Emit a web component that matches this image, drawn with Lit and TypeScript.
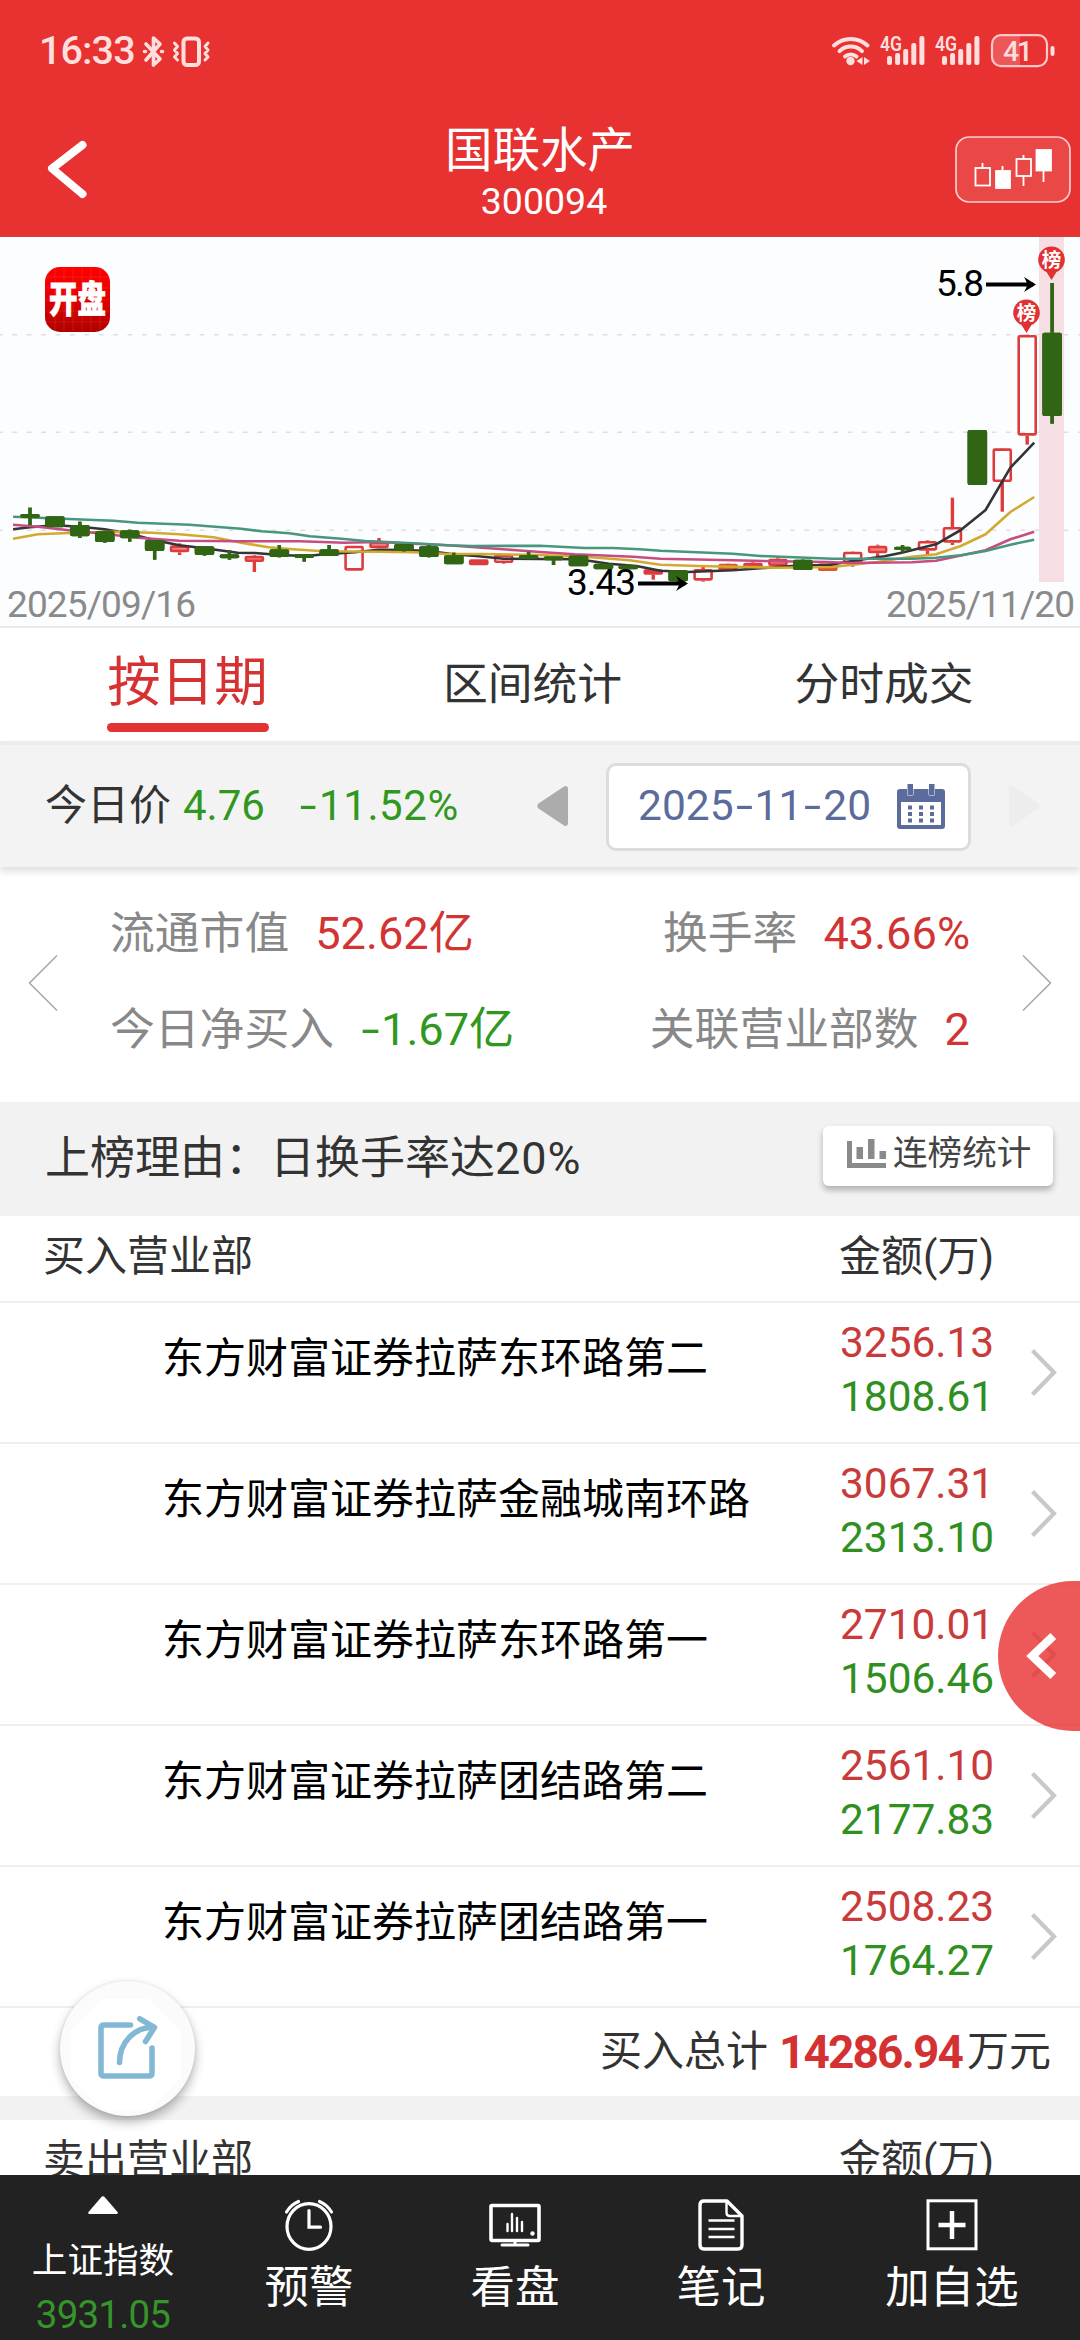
import { LitElement, html, svg, css } from "lit";
import { customElement } from "lit/decorators.js";

type Kind = "down" | "up" | "flat";
/* kind, high, low, body top, body bottom: vertical values in thirds of a pixel */
type Candle = [Kind, number, number, number, number];

const UX = 2.9037;
const px = (v: number) => v / UX;
const py = (v: number) => v / 3 - 1;

const candles: Candle[] = [
  ["down", 815, 868, 834, 846],
  ["down", 840, 874, 841, 874],
  ["down", 857, 906, 867, 901],
  ["down", 884, 920, 885, 918],
  ["down", 881, 917, 883, 907],
  ["down", 912, 971, 912, 945],
  ["up", 922, 957, 928, 949],
  ["down", 930, 959, 931, 957],
  ["down", 942, 971, 955, 967],
  ["up", 957, 1008, 959, 978],
  ["down", 927, 964, 940, 963],
  ["down", 954, 977, 954, 966],
  ["down", 927, 960, 940, 960],
  ["up", 929, 1003, 929, 1004],
  ["up", 906, 937, 916, 937],
  ["down", 924, 947, 924, 944],
  ["down", 927, 964, 931, 963],
  ["down", 950, 985, 958, 985],
  ["flat", 970, 988, 970, 988],
  ["up", 955, 983, 956, 981],
  ["down", 947, 970, 957, 969],
  ["down", 961, 987, 961, 973],
  ["down", 957, 991, 958, 991],
  ["down", 982, 1000, 983, 1000],
  ["down", 984, 1001, 988, 1000],
  ["flat", 1000, 1031, 1000, 1016],
  ["down", 1003, 1038, 1003, 1036],
  ["up", 993, 1037, 999, 1034],
  ["flat", 982, 1004, 983, 1003],
  ["flat", 977, 998, 980, 998],
  ["up", 963, 992, 968, 990],
  ["down", 970, 1002, 971, 1002],
  ["flat", 980, 1005, 982, 1005],
  ["up", 946, 992, 947, 982],
  ["up", 926, 963, 929, 952],
  ["down", 927, 949, 932, 941],
  ["up", 913, 957, 915, 944],
  ["up", 785, 927, 873, 920],
  ["down", 582, 747, 582, 747],
  ["up", 636, 827, 637, 738],
  ["up", 296, 626, 297, 599],
  ["down", 141, 563, 290, 540],
];

const averages: { color: string; points: [number, number][] }[] = [
  {
    color: "#333338",
    points: [[38,880],[87,874],[160,868],[233,872],[304,880],[377,893],[450,913],[521,928],[594,937],[690,950],[740,951],[813,957],[885,960],[955,954],[1030,949],[1100,941],[1171,942],[1245,945],[1316,955],[1390,961],[1462,968],[1568,969],[1680,970],[1768,983],[1848,990],[1918,1004],[1998,1008],[2128,1003],[2258,993],[2330,988],[2403,988],[2475,975],[2518,968],[2568,961],[2618,950],[2718,925],[2790,882],[2862,822],[2934,695],[3003,620]],
  },
  {
    color: "#d2aa30",
    points: [[38,908],[110,895],[200,891],[330,887],[440,890],[520,895],[620,904],[700,920],[780,934],[850,940],[940,946],[1100,947],[1200,949],[1300,954],[1400,954],[1568,957],[1708,963],[1828,973],[1918,986],[2028,990],[2128,992],[2258,995],[2418,993],[2475,986],[2548,978],[2598,970],[2648,962],[2718,955],[2790,930],[2862,895],[2934,828],[3003,783]],
  },
  {
    color: "#c64c82",
    points: [[38,866],[110,872],[200,883],[300,893],[400,905],[520,914],[700,916],[870,916],[1000,920],[1100,918],[1200,923],[1300,928],[1400,935],[1500,943],[1568,948],[1668,955],[1838,962],[1918,968],[2128,973],[2258,976],[2403,978],[2468,981],[2648,979],[2718,974],[2862,943],[2934,910],[3003,887]],
  },
  {
    color: "#48967e",
    points: [[38,842],[200,849],[330,854],[400,860],[550,866],[700,878],[760,886],[840,892],[900,901],[1000,909],[1060,915],[1200,922],[1300,928],[1370,930],[1568,929],[1698,936],[1778,936],[1858,940],[1918,944],[2128,953],[2208,960],[2418,968],[2648,968],[2718,965],[2790,958],[2862,945],[2934,926],[3003,911]],
  },
];

const base = css`
  :host {
    display: block;
    box-sizing: border-box;
    font-family: Roboto, "Noto Sans CJK SC", sans-serif;
    line-height: 1;
    white-space: nowrap;
    color: #333;
  }
  * {
    box-sizing: border-box;
  }
  svg {
    display: block;
    flex: none;
  }
`;

@customElement("top-bar")
class TopBar extends LitElement {
  static styles = [
    base,
    css`
      :host {
        height: 237px;
        background: #e83131;
        border-bottom: 1px solid #c4444a;
        color: #fff;
      }
      .status {
        display: flex;
        justify-content: space-between;
        height: 102px;
        padding: 0 25px 0 39px;
        align-items: center;
      }
      .left {
        display: flex;
        align-items: center;
        gap: 5px;
      }
      .clock {
        font-size: 39.5px;
        font-weight: 500;
        letter-spacing: -0.9px;
        color: #ffdede;
      }
      .nav {
        display: grid;
        grid-template-columns: 200px 1fr 200px;
        height: 134px;
      }
      .back {
        padding: 36px 0 0 44px;
      }
      .title {
        display: flex;
        flex-direction: column;
        align-items: center;
        padding-top: 24px;
      }
      .name {
        font-size: 47.5px;
        line-height: 50px;
      }
      .code {
        font-size: 37.5px;
        line-height: 50px;
        padding-left: 8px;
      }
      .tool {
        display: flex;
        justify-content: flex-end;
        padding: 34px 9px 0 0;
      }
    `,
  ];

  bars(x: number) {
    return svg`
      <text x=${x - 1} y="51" font-size="21" font-weight="600" textLength="22" lengthAdjust="spacingAndGlyphs">4G</text>
      ${[56, 53, 49, 43, 36].map(
        (y, i) => svg`<rect x=${x + 6 + i * 8.1} y=${y} width="5" height=${65 - y} rx="2"/>`,
      )}`;
  }

  render() {
    return html`
      <div class="status">
        <div class="left">
          <div class="clock">16:33</div>
          <svg width="72" height="34" viewBox="140 34 72 34" fill="none" stroke="#ffdede" stroke-width="3.6" stroke-linecap="round" stroke-linejoin="round">
            <path d="M146 44L160 59L153.500 65V38L160 44L146 60" />
            <path d="M144.500 51.500h1M161.500 51.500h1" />
            <rect x="183.500" y="38.500" width="15.500" height="26.500" rx="3.500" stroke-width="4" />
            <path d="M174.500 43l3 3.500-3 3.500 3 3.500-3 3.500 3 3M208 43l-3 3.500 3 3.500-3 3.500 3 3.500-3 3" stroke-width="3" />
          </svg>
        </div>
        <svg width="225" height="36" viewBox="830 33 225 36" fill="#ffdede">
          <g fill="none" stroke="#ffdede" stroke-width="4" stroke-linecap="round">
            <path d="M834 45.500a24.500 24.500 0 0 1 33.500 0" />
            <path d="M839.500 51.200a16 16 0 0 1 22.500 0" />
            <path d="M845 56.500a9 9 0 0 1 11.500 0" />
          </g>
          <circle cx="850.500" cy="61" r="4.200" />
          <path d="M862.500 57v8l-6-4zM864 57v8l6-4z" />
          ${this.bars(881)} ${this.bars(936)}
          <path d="M1020 36h-18q-10 0-10 10v10q0 10 10 10h18z" fill-opacity=".22" />
          <rect x="992" y="35.200" width="55" height="31" rx="9" fill="none" stroke="#ffc8c8" stroke-width="2.200" />
          <rect x="1050.500" y="46" width="4" height="10" rx="2" />
          <text x="1003" y="61" font-size="28.500" font-weight="500" textLength="30">41</text>
        </svg>
      </div>
      <div class="nav">
        <div class="back">
          <svg width="46" height="64" viewBox="44 138 46 64" fill="none" stroke="#fff" stroke-width="8" stroke-linecap="round" stroke-linejoin="round">
            <path d="M82.500 145L52 168.500L82.500 194" />
          </svg>
        </div>
        <div class="title">
          <div class="name">国联水产</div>
          <div class="code">300094</div>
        </div>
        <div class="tool">
          <svg width="116" height="67" viewBox="954.500 136 116 67" stroke="#fff" stroke-width="1.800">
            <rect x="955.500" y="137" width="114" height="65" rx="13" fill="#ffffff" fill-opacity=".11" stroke-opacity=".75" stroke-width="1.700" />
            <path d="M982 163v5M1002 166v5M1023 155v4M1023 176v10M1043 170v12" fill="none" />
            <rect x="975" y="168" width="14.500" height="17.500" fill="none" />
            <rect x="995.500" y="171" width="14" height="17" fill="#fff" />
            <rect x="1016" y="159" width="14.500" height="17" fill="none" />
            <rect x="1036" y="150" width="14.500" height="20.500" fill="#fff" />
          </svg>
        </div>
      </div>
    `;
  }
}

@customElement("kline-chart")
class KlineChart extends LitElement {
  static styles = [
    base,
    css`
      :host {
        height: 391px;
        background: #fcfdff;
        border-bottom: 2px solid #e9e9eb;
      }
      text {
        font-family: Roboto, "Noto Sans CJK SC", sans-serif;
      }
    `,
  ];

  candle([kind, high, low, top, bottom]: Candle, i: number) {
    const x = 30 + i * 24.93;
    const color = kind === "down" ? "#306613" : "#dd3c3c";
    const w = i === 35 ? 17 : 19.6;
    const edge = 2.6;
    const t = py(top);
    const h = (bottom - top) / 3;
    return svg`
      ${high < top ? svg`<rect x=${x - 1.7} y=${py(high)} width="3.4" height=${(top - high) / 3} fill=${color}/>` : null}
      ${low > bottom ? svg`<rect x=${x - 1.7} y=${py(bottom)} width="3.4" height=${(low - bottom) / 3} fill=${color}/>` : null}
      ${
        kind === "up"
          ? svg`<rect x=${x - w / 2 + edge / 2} y=${t + edge / 2} width=${w - edge} height=${Math.max(h - edge, 1)}
              fill=${h < 8 ? "#f5807c" : "none"} stroke=${color} stroke-width=${edge} rx="1"/>`
          : svg`<rect x=${x - w / 2} y=${t} width=${w} height=${h} fill=${i === 28 || i === 32 ? "#e0542c" : color} rx="2"/>`
      }`;
  }

  badge(x: number, y: number) {
    return svg`
      <path d="M${x} ${y + 20}L${x - 5} ${y + 12}A13.300 13.300 0 1 1 ${x + 5} ${y + 12}Z" fill="#e03232"/>
      <text x=${x} y=${y + 7} font-size="19.500" font-weight="600" fill="#fff" text-anchor="middle">榜</text>`;
  }

  arrow(x: number, y: number) {
    return svg`
      <path d="M${x} ${y}h47" stroke="#000" stroke-width="3.800" fill="none"/>
      <path d="M${x + 50} ${y}l-12 -7.500q3 5 3 7.500t-3 7.500z" fill="#000"/>`;
  }

  render() {
    return html`
      <svg width="1080" height="389" viewBox="0 0 1080 389">
        <g stroke="#dedee6" stroke-width="1.500" stroke-dasharray="4.800 9.600" stroke-dashoffset="2">
          <path d="M0 97.700H1080M0 195.300H1080M0 293.300H1080" />
        </g>
        <rect x="1039" y="0" width="25" height="345" fill="#f6dfe4" />
        <g>${candles.map((c, i) => this.candle(c, i))}</g>
        <g fill="none" stroke-width="2.600" stroke-linejoin="round">
          ${averages.map(
            (a) =>
              svg`<polyline stroke=${a.color} points=${a.points.map(([x, y]) => `${px(x).toFixed(1)},${py(y).toFixed(1)}`).join(" ")}/>`,
          )}
        </g>
        <g>${candles.map((c, i) => (c[0] === "down" ? this.candle(c, i) : null))}</g>
        ${this.badge(1051.5, 23)} ${this.badge(1026.5, 76)}
        <text x="936" y="59" font-size="37" textLength="48">5.8</text>
        ${this.arrow(986, 47.5)}
        <text x="567" y="357.500" font-size="37" textLength="69">3.43</text>
        ${this.arrow(638, 346.5)}
        <g fill="#8a8a8a" font-size="37">
          <text x="7" y="380" textLength="189">2025/09/16</text>
          <text x="886" y="380" textLength="189">2025/11/20</text>
        </g>
        <defs>
          <linearGradient id="logo" x2="0" y2="1">
            <stop offset="0" stop-color="#ff0000" />
            <stop offset=".35" stop-color="#f00000" />
            <stop offset="1" stop-color="#b00000" />
          </linearGradient>
        </defs>
        <rect x="45" y="30" width="65" height="65" rx="15" fill="url(#logo)" />
        <path d="M55 31v63M64 31v63M73 31v63M82 31v63M91 31v63M100 31v63M46 40h63M46 51h63M46 63h63M46 74h63M46 85h63" stroke="#fff" stroke-opacity=".09" />
        <text transform="translate(77.500 76) scale(1 1.300)" font-size="28.500" font-weight="900" fill="#fff" stroke="#fff" stroke-width=".6" text-anchor="middle">开盘</text>
      </svg>
    `;
  }
}

@customElement("day-panel")
class DayPanel extends LitElement {
  static styles = [
    base,
    css`
      .tabs {
        display: grid;
        grid-template-columns: 375px 315px 1fr;
        height: 113px;
        background: #fff;
      }
      .tab {
        display: flex;
        flex-direction: column;
        align-items: center;
        font-size: 44.8px;
        line-height: 114px;
      }
      .tab.last {
        padding-right: 2px;
      }
      .tab.active {
        color: #d63232;
        font-size: 53.5px;
        line-height: 110px;
      }
      .tab.active::after {
        content: "";
        width: 162px;
        height: 9px;
        margin-top: -15px;
        border-radius: 5px;
        background: #e43131;
      }
      .price {
        display: flex;
        align-items: center;
        height: 126px;
        padding: 0 40px 0 45px;
        background: #f3f3f3;
        border-top: 4px solid #ececec;
        box-shadow: 0 5px 7px rgba(0, 0, 0, 0.12);
        position: relative;
        font-size: 42px;
      }
      .green {
        color: #30981f;
      }
      .red {
        color: #d23434;
      }
      .today {
        width: 492px;
        display: flex;
      }
      .val {
        margin-left: 12px;
        width: 115px;
      }
      .pct {
        display: flex;
        letter-spacing: 0.6px;
      }
      .date {
        display: flex;
        align-items: center;
        width: 365px;
        height: 88px;
        margin: 1px 38px 0;
        padding: 0 23px 0 29px;
        justify-content: space-between;
        border: 3px solid #dcdcdc;
        border-radius: 10px;
        background: #fff;
        color: #5b6b9b;
        font-size: 42.5px;
      }
      .date span {
        display: flex;
      }
      .hy {
        width: 21px;
        font-style: normal;
        text-align: center;
        transform: scaleX(1.45);
      }
      .stats {
        display: flex;
        height: 235px;
        padding: 0 28px 4px;
        align-items: center;
        justify-content: space-between;
        background: #fff;
        font-size: 44.8px;
      }
      .grid {
        display: grid;
        grid-template-columns: auto auto;
        justify-content: space-between;
        width: 860px;
        row-gap: 46px;
        line-height: 50px;
        padding-bottom: 1px;
      }
      .cell {
        display: flex;
        gap: 26px;
        color: #888;
      }
      .cell.right {
        justify-content: flex-end;
      }
      .cell b {
        display: flex;
        font-weight: 400;
        font-size: 45.2px;
      }
      .reason {
        display: flex;
        align-items: center;
        justify-content: space-between;
        height: 114px;
        background: #f2f2f2;
        padding: 0 27px 0 45px;
        font-size: 45px;
      }
      .why {
        margin-top: -2px;
      }
      .why span {
        letter-spacing: 1px;
      }
      .streak {
        display: flex;
        align-items: center;
        gap: 7px;
        width: 230px;
        height: 60px;
        margin-bottom: 7px;
        padding: 0 0 4px 24px;
        background: #fff;
        border-radius: 6px;
        box-shadow: 0 4px 6px rgba(0, 0, 0, 0.28);
        font-size: 34.6px;
        color: #444;
      }
    `,
  ];

  render() {
    return html`
      <div class="tabs">
        <div class="tab active">按日期</div>
        <div class="tab">区间统计</div>
        <div class="tab last">分时成交</div>
      </div>
      <div class="price">
        <div class="today">
          <span>今日价</span><span class="val green">4.76</span><span class="pct green"><i class="hy">-</i>11.52%</span>
        </div>
        <svg width="31" height="40" viewBox="0 0 31 40" fill="#acacac">
          <path d="M31 2v36q-1 3-4 1.500L1.500 22.500q-2.500-2.500 0-5L27 .5q3-1.500 4 1.500z" />
        </svg>
        <div class="date">
          <span>2025<i class="hy">-</i>11<i class="hy">-</i>20</span>
          <svg width="48" height="45" viewBox="0 0 48 45" fill="#5b6b9b">
            <path fill-rule="evenodd" d="M3 5H45q3 0 3 3V42q0 3-3 3H3q-3 0-3-3V8q0-3 3-3zM4 18V41H44V18z" />
            <path d="M10.500 0h5.500v11h-5.500zM32 0h5.500v11h-5.500z" stroke="#fff" stroke-width="1" paint-order="stroke" />
            <path d="M11 21.500h4v4h-4zM22 21.500h4v4h-4zM33 21.500h4v4h-4zM11 28h4v4h-4zM22 28h4v4h-4zM33 28h4v4h-4zM11 34.500h4v4h-4zM22 34.500h4v4h-4zM33 34.500h4v4h-4z" />
          </svg>
        </div>
        <svg width="31" height="40" viewBox="0 0 31 40" fill="#ededed">
          <path d="M0 2v36q1 3 4 1.500L29.500 22.500q2.500-2.500 0-5L4 .5Q1-1 0 2z" />
        </svg>
      </div>
      <div class="stats">
        <svg width="30" height="60" viewBox="0 0 30 60" fill="none" stroke="#aaa" stroke-width="1.600">
          <path d="M29 2.500L1.500 30L29 57.500" />
        </svg>
        <div class="grid">
          <div class="cell">流通市值<b class="red">52.62亿</b></div>
          <div class="cell right">换手率<b class="red">43.66%</b></div>
          <div class="cell">今日净买入<b class="green"><i class="hy">-</i>1.67亿</b></div>
          <div class="cell right">关联营业部数<b class="red">2</b></div>
        </div>
        <svg width="30" height="60" viewBox="0 0 30 60" fill="none" stroke="#aaa" stroke-width="1.600">
          <path d="M1 2.500L28.500 30L1 57.500" />
        </svg>
      </div>
      <div class="reason">
        <div class="why">上榜理由：日换手率达<span>20%</span></div>
        <div class="streak">
          <svg width="39" height="29" viewBox="0 0 39 29" fill="#8a8a8a">
            <path d="M0 2h5v22h34v5H0zM9.500 8h6.500v12H9.500zM21 0h6.500v20H21zM32.500 12H39v8h-6.500z" />
          </svg>
          <span>连榜统计</span>
        </div>
      </div>
    `;
  }
}

@customElement("seat-list")
class SeatList extends LitElement {
  static styles = [
    base,
    css`
      :host {
        height: 959px;
        overflow: hidden;
        background: #fff;
        font-size: 42px;
      }
      .head {
        display: grid;
        grid-template-columns: 796px 1fr;
        height: 87px;
        padding-left: 43px;
        line-height: 81px;
        border-bottom: 2px solid #efefef;
      }
      .row {
        display: grid;
        grid-template-columns: 678px 191px auto;
        align-items: start;
        height: 141px;
        padding: 13px 0 0 162px;
        border-bottom: 2px solid #efefef;
      }
      .seat {
        color: #000;
        line-height: 86px;
      }
      .nums {
        font-size: 42.4px;
        line-height: 54px;
      }
      .buy {
        color: #c93a3a;
      }
      .sell {
        color: #30901f;
      }
      .row svg {
        margin-top: 32px;
      }
      .total {
        display: flex;
        justify-content: flex-end;
        height: 88px;
        padding-right: 29px;
        line-height: 88px;
      }
      .total b {
        margin: 0 5px 0 11px;
        font-size: 46px;
        font-weight: 700;
        letter-spacing: -1.9px;
        color: #d43232;
      }
      .gap {
        height: 24px;
        background: #f2f2f2;
      }
    `,
  ];

  seats: [string, string, string][] = [
    ["东方财富证券拉萨东环路第二", "3256.13", "1808.61"],
    ["东方财富证券拉萨金融城南环路", "3067.31", "2313.10"],
    ["东方财富证券拉萨东环路第一", "2710.01", "1506.46"],
    ["东方财富证券拉萨团结路第二", "2561.10", "2177.83"],
    ["东方财富证券拉萨团结路第一", "2508.23", "1764.27"],
  ];

  render() {
    return html`
      <div class="head"><span>买入营业部</span><span>金额(万)</span></div>
      ${this.seats.map(
        ([name, buy, sell]) => html`
          <div class="row">
            <div class="seat">${name}</div>
            <div class="nums">
              <div class="buy">${buy}</div>
              <div class="sell">${sell}</div>
            </div>
            <svg width="28" height="48" viewBox="0 0 28 48" fill="none" stroke="#c8c8c8" stroke-width="4.200">
              <path d="M1.500 2.500L23 24.500L1.500 46.500" />
            </svg>
          </div>
        `,
      )}
      <div class="total"><span>买入总计</span><b>14286.94</b><span>万元</span></div>
      <div class="gap"></div>
      <div class="head"><span>卖出营业部</span><span>金额(万)</span></div>
    `;
  }
}

@customElement("bottom-nav")
class BottomNav extends LitElement {
  static styles = [
    base,
    css`
      :host {
        display: grid;
        grid-template-columns: 206px 206px 206px 206px 1fr;
        height: 165px;
        background: #222;
        color: #fff;
      }
      .item {
        display: flex;
        flex-direction: column;
        align-items: center;
        gap: 9px;
        padding-top: 23px;
        font-size: 44.5px;
        line-height: 54px;
      }
      .index {
        gap: 0;
        padding-top: 21px;
        font-size: 35.6px;
      }
      .index .label {
        margin-top: 20px;
      }
      .index .num {
        font-size: 38.5px;
        color: #35942a;
        letter-spacing: -0.8px;
      }
    `,
  ];

  render() {
    return html`
      <div class="item index">
        <svg width="30" height="18" viewBox="0 0 30 18" fill="#fff">
          <path d="M13 1.500q2-2.500 4 0L29.500 16q1 2-1 2h-27q-2 0-1-2z" />
        </svg>
        <div class="label">上证指数</div>
        <div class="num">3931.05</div>
      </div>
      <div class="item">
        <svg width="52" height="54" viewBox="0 0 52 54" fill="none" stroke="#fff" stroke-width="3.200" stroke-linecap="round">
          <ellipse cx="26" cy="28.500" rx="22" ry="22.800" />
          <path d="M26 12.500v16.700h11.500M3.500 14Q8 6.500 15.500 3.500M48.500 14Q44 6.500 36.500 3.500" />
        </svg>
        <div>预警</div>
      </div>
      <div class="item">
        <svg width="52" height="54" viewBox="0 0 52 54" fill="none" stroke="#fff">
          <rect x="2" y="7.500" width="48" height="35" rx="1" stroke-width="3.600" />
          <path d="M26 43v4M13 47h26" stroke-width="3" stroke-linecap="round" />
          <path d="M18.500 26v7M23 16v17M28 20v13M33 24v9" stroke-width="2.400" stroke-linecap="round" />
          <circle cx="43.500" cy="35.500" r="2.200" fill="#fff" stroke="none" />
        </svg>
        <div>看盘</div>
      </div>
      <div class="item">
        <svg width="52" height="54" viewBox="0 0 52 54" fill="none" stroke="#fff" stroke-width="3.400" stroke-linejoin="round">
          <path d="M8 3H32L47 18V47q0 4-4 4H9q-4 0-4-4V7q0-4 4-4z" />
          <path d="M31.500 4v10.500q0 3.500 3.500 3.500H46" stroke-width="2.400" />
          <path d="M13.500 22.500h26M13.500 31h26M13.500 39h26" stroke-width="2.600" />
        </svg>
        <div>笔记</div>
      </div>
      <div class="item">
        <svg width="52" height="54" viewBox="0 0 52 54" fill="none" stroke="#fff">
          <rect x="2" y="2.800" width="48" height="48" stroke-width="3" />
          <path d="M26 13v28M12.500 27h27" stroke-width="4.500" />
        </svg>
        <div>加自选</div>
      </div>
    `;
  }
}

@customElement("app-root")
class AppRoot extends LitElement {
  static styles = [
    base,
    css`
      :host {
        position: relative;
        width: 1080px;
        height: 2340px;
        overflow: hidden;
        background: #fff;
      }
      .share {
        position: absolute;
        left: 60px;
        top: 1981px;
        width: 135px;
        height: 135px;
        border-radius: 50%;
        background: #fbfbfb;
        box-shadow: 0 6px 11px rgba(0, 0, 0, 0.3), 0 0 3px rgba(0, 0, 0, 0.1);
      }
      .drawer {
        position: absolute;
        right: 0;
        top: 1580px;
      }
    `,
  ];

  render() {
    return html`
      <top-bar></top-bar>
      <kline-chart></kline-chart>
      <day-panel></day-panel>
      <seat-list></seat-list>
      <bottom-nav></bottom-nav>
      <div class="share">
        <svg width="135" height="135" viewBox="60 1981 135 135" fill="none" stroke="#83b8d5" stroke-width="5.600" stroke-linecap="round" stroke-linejoin="round">
          <path d="M103 1999h46l32 32v47l-32 32h-46l-32-32v-47z" fill="#fff" stroke="none" />
          <path d="M130.500 2025H104q-3 0-3 3V2073q0 3 3 3H149q3 0 3-3V2048" />
          <path d="M119.500 2062.500C119.500 2042 135 2027 153 2027.500M139.800 2018.800L154.500 2027.300L145.500 2041.500" />
        </svg>
      </div>
      <svg class="drawer" width="82" height="152" viewBox="0 0 82 152">
        <path d="M82 1H75A75 75 0 0 0 75 151H82z" fill="#e83030" fill-opacity=".8" />
        <path d="M55.300 56L34.300 76L55.300 96" fill="none" stroke="#fff" stroke-width="8.500" />
      </svg>
    `;
  }
}
